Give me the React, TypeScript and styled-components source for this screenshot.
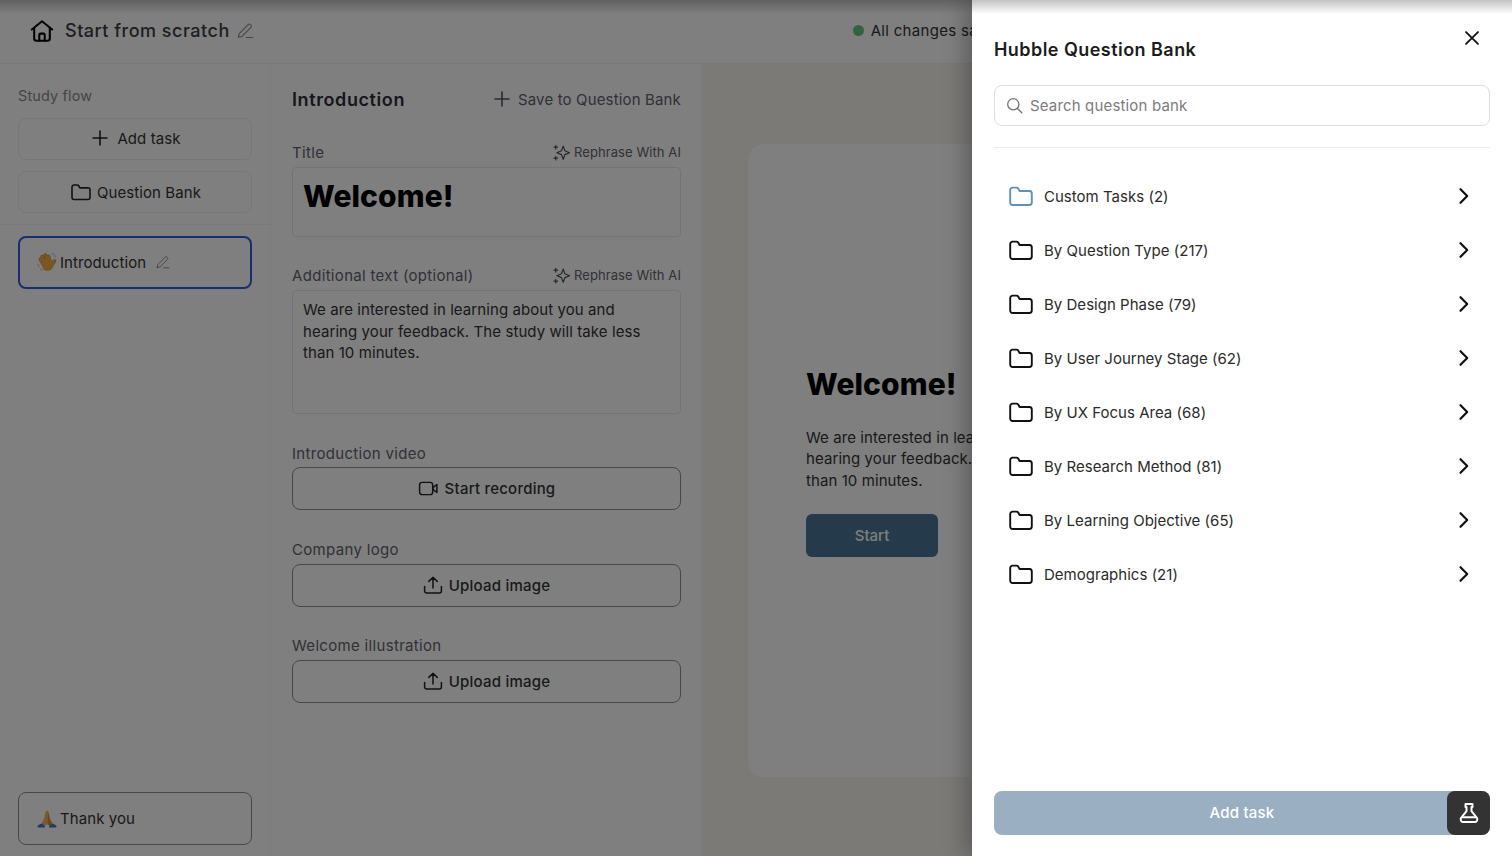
import React from "react";
import styled, { createGlobalStyle } from "styled-components";

const Global = createGlobalStyle`
  html, body { margin: 0; padding: 0; height: 100%; overflow: hidden; background: #fff; }
  * { box-sizing: border-box; }
  body { font-family: Inter, "Open Sans", "Liberation Sans", sans-serif; }
`;

const Page = styled.div`
  position: relative;
  width: 1512px;
  height: 856px;
  overflow: hidden;
  display: flex;
  flex-direction: column;
  background: #fff;
`;
const Header = styled.header`
  height: 64px;
  flex: none;
  display: flex;
  align-items: center;
  padding: 0 0 2px 29px;
  border-bottom: 1px solid #f0f0f0;
`;
const HeaderTitle = styled.span`
  margin-left: 10px;
  margin-right: 7px;
  font-size: 18px;
  letter-spacing: 0.5px;
  color: #3c3c44;
  font-weight: 500;
`;
const Saved = styled.div`
  margin-left: 599px;
  display: flex;
  align-items: center;
  gap: 7px;
  font-size: 15px;
  letter-spacing: 0.3px;
  color: #333;
  white-space: nowrap;
`;
const Dot = styled.span`
  width: 11px;
  height: 11px;
  border-radius: 50%;
  background: #62c87a;
`;
const Body = styled.div`
  flex: 1;
  display: flex;
  min-height: 0;
`;
const Sidebar = styled.aside`
  width: 271px;
  flex: none;
  display: flex;
  flex-direction: column;
  border-right: 1px solid #f7f7f7;
  padding: 22px 18px 11px;
`;
const SideLabel = styled.div`
  font-size: 14.5px;
  line-height: 20px;
  letter-spacing: 0.12px;
  color: #8a8a8a;
`;
const SideButton = styled.button<{ $top: number; $nudge: number; $lift: number }>`
  width: 234px;
  height: 42px;
  margin-top: ${(p) => p.$top}px;
  display: flex;
  align-items: center;
  justify-content: center;
  background: #fff;
  border: 1px solid #ededed;
  border-radius: 8px;
  font: inherit;
  font-size: 15px;
  letter-spacing: 0.08px;
  color: #333;
  padding: 0 0 ${(p) => p.$lift}px ${(p) => p.$nudge}px;
`;
const ButtonLabel = styled.span<{ $gap: number }>`
  margin-left: ${(p) => p.$gap}px;
`;
const SideRule = styled.div`
  height: 1px;
  background: #f3f3f3;
  margin: 11px -18px;
`;
const TaskCard = styled.div<{ $active?: boolean }>`
  width: 234px;
  height: 53px;
  display: flex;
  align-items: center;
  gap: 3px;
  padding-left: ${(p) => (p.$active ? 17 : 18)}px;
  padding-bottom: ${(p) => (p.$active ? 1 : 0)}px;
  border-radius: 8px;
  border: ${(p) => (p.$active ? "2px solid #2f5fe0" : "1px solid #8f8f8f")};
  margin-top: ${(p) => (p.$active ? "0" : "auto")};
  font-size: 15px;
  letter-spacing: 0.08px;
  color: #333;
`;
const TaskPencil = styled.span`
  display: flex;
  margin-left: 7px;
`;
const Editor = styled.section`
  width: 431px;
  flex: none;
  padding: 22px 20px 0 21px;
  border-right: 1px solid #f4f4f4;
`;
const EditorHead = styled.div`
  height: 26px;
  display: flex;
  align-items: center;
  justify-content: space-between;
`;
const EditorTitle = styled.h2`
  margin: 0;
  font-size: 18px;
  font-weight: 600;
  letter-spacing: 0.6px;
  color: #2e2e36;
`;
const SaveLink = styled.div`
  display: flex;
  align-items: center;
  gap: 8px;
  font-size: 15px;
  letter-spacing: 0.15px;
  color: #62626e;
`;
const FieldHead = styled.div<{ $top: number }>`
  height: 20px;
  margin-top: ${(p) => p.$top}px;
  display: flex;
  align-items: center;
  justify-content: space-between;
  font-size: 15px;
  letter-spacing: 0.32px;
  color: #62626e;
`;
const Rephrase = styled.span`
  display: flex;
  align-items: center;
  gap: 4px;
  font-size: 13px;
  letter-spacing: 0.08px;
`;
const TitleBox = styled.div`
  margin-top: 5px;
  height: 70px;
  border: 1px solid #e6e6e6;
  border-radius: 4px;
  padding: 9px 10px;
  font-size: 30px;
  line-height: 38px;
  font-weight: 800;
  letter-spacing: 0.1px;
  color: #000;
`;
const TextBox = styled.div`
  margin-top: 5px;
  height: 124px;
  border: 1px solid #e6e6e6;
  border-radius: 4px;
  padding: 8px 10px;
  font-size: 15px;
  line-height: 21.5px;
  letter-spacing: 0.08px;
  color: #333;
`;
const Outline = styled.button<{ $top: number }>`
  width: 100%;
  height: 43px;
  margin-top: ${(p) => p.$top}px;
  display: flex;
  align-items: center;
  justify-content: center;
  gap: 6px;
  background: transparent;
  border: 1px solid #8f8f8f;
  border-radius: 8px;
  font: inherit;
  font-size: 15px;
  font-weight: 500;
  letter-spacing: 0.22px;
  color: #333;
  padding: 0 0 1px;
`;
const Preview = styled.main`
  flex: 1;
  background: #f6f4ee;
  padding: 80px 46px 79px;
  min-width: 0;
`;
const PreviewCard = styled.div`
  width: 720px;
  height: 633px;
  border-radius: 16px;
  background: #fff;
  padding-left: 58px;
  display: flex;
  flex-direction: column;
  justify-content: center;
  align-items: flex-start;
`;
const PreviewTitle = styled.h1`
  margin: 0;
  font-size: 30px;
  line-height: 40px;
  font-weight: 800;
  letter-spacing: 0.1px;
  color: #000;
`;
const PreviewText = styled.p`
  margin: 23px 0 0;
  font-size: 15px;
  line-height: 21.5px;
  letter-spacing: 0.08px;
  color: #333;
`;
const StartButton = styled.button`
  margin-top: 23px;
  width: 132px;
  height: 43px;
  border: none;
  border-radius: 6px;
  background: #4a7594;
  color: #fff;
  font: inherit;
  font-size: 15px;
  font-weight: 500;
  padding: 0 0 1px;
`;
const Overlay = styled.div`
  position: absolute;
  inset: 0;
  background: rgba(0, 0, 0, 0.5);
`;
const Drawer = styled.aside`
  position: absolute;
  top: 0;
  right: 0;
  bottom: 0;
  width: 540px;
  background: #fff;
  display: flex;
  flex-direction: column;
  padding: 37px 22px 21px;
  box-shadow: -4px 0 24px rgba(0, 0, 0, 0.32);
`;
const TopShade = styled.div`
  position: absolute;
  left: 0;
  right: 0;
  top: 0;
  height: 14px;
  background: linear-gradient(rgba(0, 0, 0, 0.24), rgba(0, 0, 0, 0));
`;
const CloseBtn = styled.span`
  position: absolute;
  top: 27px;
  right: 29px;
  display: flex;
  color: #111;
`;
const DrawerTitle = styled.h2`
  margin: 0;
  font-size: 18px;
  line-height: 26px;
  font-weight: 600;
  letter-spacing: 0.45px;
  color: #1c1c1c;
`;
const Search = styled.div`
  margin-top: 22px;
  height: 41px;
  flex: none;
  border: 1px solid #dedede;
  border-radius: 8px;
  display: flex;
  align-items: center;
  gap: 7px;
  padding-left: 11px;
  font-size: 15px;
  letter-spacing: 0.16px;
  color: #7c7c7c;
`;
const DrawerRule = styled.div`
  margin-top: 21px;
  height: 1px;
  flex: none;
  background: #ececec;
`;
const List = styled.ul`
  list-style: none;
  margin: 21px 0 0;
  padding: 0;
`;
const Row = styled.li`
  height: 54px;
  display: flex;
  align-items: center;
  padding: 0 16px 0 15px;
  font-size: 15px;
  letter-spacing: 0.02px;
  color: #2b2b2b;
`;
const RowText = styled.span`
  flex: 1;
  margin-left: 11px;
`;
const Footer = styled.div`
  position: relative;
  margin-top: auto;
  height: 44px;
  flex: none;
`;
const AddTask = styled.button`
  width: 100%;
  height: 44px;
  border: none;
  border-radius: 8px;
  background: #9aafc1;
  color: #fff;
  font: inherit;
  font-size: 15px;
  font-weight: 500;
  letter-spacing: 0.2px;
  padding: 0 0 2px;
`;
const FlaskBtn = styled.span`
  position: absolute;
  right: 0;
  top: 0;
  width: 43px;
  height: 44px;
  border-radius: 8px;
  background: #333;
  display: flex;
  align-items: center;
  justify-content: center;
  color: #fff;
`;

type IconProps = { size?: number; color?: string; width?: number };
const Svg: React.FC<IconProps & { children: React.ReactNode; box?: number }> = ({
  size = 24,
  color = "currentColor",
  width = 1.6,
  box = 24,
  children,
}) => (
  <svg
    width={size}
    height={size}
    viewBox={`0 0 ${box} ${box}`}
    fill="none"
    stroke={color}
    strokeWidth={width}
    strokeLinecap="round"
    strokeLinejoin="round"
    style={{ flex: "none" }}
  >
    {children}
  </svg>
);

const HomeIcon = () => (
  <Svg size={26} color="#000" width={1.9}>
    <path d="M2.6 10.6 12 3l9.4 7.6" />
    <path d="M4.8 9v10a2 2 0 0 0 2 2h10.4a2 2 0 0 0 2-2V9" />
    <path d="M9.5 21v-5.6a1 1 0 0 1 1-1h3a1 1 0 0 1 1 1V21" />
  </Svg>
);
const PencilIcon = ({ size = 17 }: { size?: number }) => (
  <Svg size={size} box={16} color="#8e8e8e" width={1.1}>
    <path d="M1.4 14.4l.7-3.4 8.4-8.6a1.5 1.5 0 0 1 2.1 0l.5.5a1.5 1.5 0 0 1 0 2.1L4.7 13.6l-3.3.8z" />
    <path d="M8.8 14.6h6" />
  </Svg>
);
const PlusIcon = ({ color = "#222" }: { color?: string }) => (
  <Svg size={16} box={16} color={color} width={1.6}>
    <path d="M8 1v14M1 8h14" />
  </Svg>
);
const FolderIcon = ({ color = "#111", size = 24 }: { color?: string; size?: number }) => (
  <Svg size={size} color={color} width={1.9}>
    <path d="M1.2 6a2.4 2.4 0 0 1 2.4-2.4h3.9c.7 0 1.3.3 1.7.9L10.6 7h10a2.4 2.4 0 0 1 2.2 2.4v9.2a2.4 2.4 0 0 1-2.4 2.4H3.6a2.4 2.4 0 0 1-2.4-2.4V6z" />
  </Svg>
);
const SparkleIcon = () => (
  <Svg size={17} box={16} color="#4c4c56" width={1.1}>
    <path d="M9.6 2l1.6 4.4 4.4 1.8-4.4 1.8-1.6 4.4-1.6-4.4-4.4-1.8 4.4-1.8z" />
    <path d="M2.6 1.2v3.4M.9 2.9h3.4M2.6 11.6v3.4M.9 13.3h3.4" />
  </Svg>
);
const VideoIcon = () => (
  <Svg size={21} color="#222" width={1.7}>
    <rect x="1.8" y="5" width="15" height="14" rx="3" />
    <path d="M17 11l4.6-3.6v9.2L17 13z" />
  </Svg>
);
const UploadIcon = () => (
  <Svg size={20} box={20} color="#222" width={1.5}>
    <path d="M10 13V2.4M5.8 6.4L10 2.2l4.2 4.2" />
    <path d="M1.6 11.6v4.4a2 2 0 0 0 2 2h12.8a2 2 0 0 0 2-2v-4.4" />
  </Svg>
);
const SearchIcon = () => (
  <Svg size={17} box={17} color="#707070" width={1.3}>
    <circle cx="7.3" cy="7.3" r="5.6" />
    <path d="M11.5 11.5l4.3 4.3" />
  </Svg>
);
const CloseIcon = () => (
  <Svg size={22} color="#111" width={2}>
    <path d="M5.5 5.5l13 13M18.5 5.5l-13 13" />
  </Svg>
);
const ChevronIcon = () => (
  <Svg size={20} box={20} color="#111" width={2.2}>
    <path d="M6.5 3.2L13.2 10l-6.7 6.8" />
  </Svg>
);
const FlaskIcon = () => (
  <Svg size={24} color="#fff" width={2}>
    <path d="M8.5 3h7v3h-1v4.2l5.4 6.6c1 1.3.1 4.2-1.6 4.2H5.7c-1.7 0-2.6-2.9-1.6-4.2l5.4-6.6V6h-1z" />
    <path d="M5.2 16.2h13.6" />
  </Svg>
);
const WaveIcon = () => (
  <svg width="20" height="20" viewBox="0 0 20 20" fill="none" strokeLinecap="round" style={{ flex: "none" }}>
    <g stroke="#a87424" strokeWidth="3.4">
      <path d="M6 12 3.4 7.2M8 10 5.2 4.4M10.5 9 8.4 3M13 9.2 11.6 4.4M14.6 13.4 17.4 9" />
    </g>
    <g stroke="#f2ae46" strokeWidth="2.7">
      <path d="M6 12 3.4 7.2M8 10 5.2 4.4M10.5 9 8.4 3M13 9.2 11.6 4.4M14.6 13.4 17.4 9" />
    </g>
    <circle cx="10.6" cy="13.2" r="5.8" fill="#f2ae46" />
    <path d="M.9 12.2l1.2 2.6M3.6 17l1.8 1.2M15.2 1.2l1.8 1M17.6 3.4l1 1.6" stroke="#b9c8ea" strokeWidth="1.1" />
  </svg>
);
const PrayIcon = () => (
  <svg width="20" height="20" viewBox="0 0 20 20" style={{ flex: "none" }}>
    <path d="M9.7 1.4c.3 0 .3.6.3 1.6v12.4l-3 1.2L4.2 15C6.4 12 7.2 9.6 8 5.6c.3-1.8 1-4.2 1.7-4.2z" fill="#f0b45c" />
    <path d="M10.3 1.4c.7 0 1.4 2.4 1.7 4.2.8 4 1.6 6.4 3.8 9.4L13 16.6l-2.7-1.2z" fill="#d49237" />
    <path d="M.9 16.4l3.3-1.8 3.7 2.1v1.8H1.2c-.8 0-.9-1.5-.3-2.1zM19.1 16.4l-3.3-1.8-3.7 2.1v1.8h6.7c.8 0 .9-1.5.3-2.1z" fill="#3c78c8" />
  </svg>
);

const rows = [
  "By Question Type (217)",
  "By Design Phase (79)",
  "By User Journey Stage (62)",
  "By UX Focus Area (68)",
  "By Research Method (81)",
  "By Learning Objective (65)",
  "Demographics (21)",
];

export default function App() {
  return (
    <Page>
      <Global />
      <Header>
        <HomeIcon />
        <HeaderTitle>Start from scratch</HeaderTitle>
        <PencilIcon />
        <Saved>
          <Dot />
          All changes saved
        </Saved>
      </Header>
      <Body>
        <Sidebar>
          <SideLabel>Study flow</SideLabel>
          <SideButton $top={12} $nudge={3} $lift={2}>
            <PlusIcon />
            <ButtonLabel $gap={9}>Add task</ButtonLabel>
          </SideButton>
          <SideButton $top={11} $nudge={2} $lift={0}>
            <FolderIcon size={20} color="#222" />
            <ButtonLabel $gap={6}>Question Bank</ButtonLabel>
          </SideButton>
          <SideRule />
          <TaskCard $active>
            <WaveIcon />
            Introduction
            <TaskPencil>
              <PencilIcon size={14} />
            </TaskPencil>
          </TaskCard>
          <TaskCard>
            <PrayIcon />
            Thank you
          </TaskCard>
        </Sidebar>
        <Editor>
          <EditorHead>
            <EditorTitle>Introduction</EditorTitle>
            <SaveLink>
              <PlusIcon color="#55555f" />
              Save to Question Bank
            </SaveLink>
          </EditorHead>
          <FieldHead $top={30}>
            Title
            <Rephrase>
              <SparkleIcon />
              Rephrase With AI
            </Rephrase>
          </FieldHead>
          <TitleBox>Welcome!</TitleBox>
          <FieldHead $top={28}>
            Additional text (optional)
            <Rephrase>
              <SparkleIcon />
              Rephrase With AI
            </Rephrase>
          </FieldHead>
          <TextBox>
            We are interested in learning about you and
            <br />
            hearing your feedback. The study will take less
            <br />
            than 10 minutes.
          </TextBox>
          <FieldHead $top={29}>Introduction video</FieldHead>
          <Outline $top={4}>
            <VideoIcon />
            Start recording
          </Outline>
          <FieldHead $top={29}>Company logo</FieldHead>
          <Outline $top={5}>
            <UploadIcon />
            Upload image
          </Outline>
          <FieldHead $top={28}>Welcome illustration</FieldHead>
          <Outline $top={5}>
            <UploadIcon />
            Upload image
          </Outline>
        </Editor>
        <Preview>
          <PreviewCard>
            <PreviewTitle>Welcome!</PreviewTitle>
            <PreviewText>
              We are interested in learning about you and
              <br />
              hearing your feedback. The study will take less
              <br />
              than 10 minutes.
            </PreviewText>
            <StartButton>Start</StartButton>
          </PreviewCard>
        </Preview>
      </Body>
      <Overlay />
      <Drawer>
        <DrawerTitle>Hubble Question Bank</DrawerTitle>
        <CloseBtn>
          <CloseIcon />
        </CloseBtn>
        <Search>
          <SearchIcon />
          Search question bank
        </Search>
        <DrawerRule />
        <List>
          <Row>
            <FolderIcon color="#5f90b8" />
            <RowText>Custom Tasks (2)</RowText>
            <ChevronIcon />
          </Row>
          {rows.map((r) => (
            <Row key={r}>
              <FolderIcon />
              <RowText>{r}</RowText>
              <ChevronIcon />
            </Row>
          ))}
        </List>
        <Footer>
          <AddTask>Add task</AddTask>
          <FlaskBtn>
            <FlaskIcon />
          </FlaskBtn>
        </Footer>
      </Drawer>
      <TopShade />
    </Page>
  );
}
